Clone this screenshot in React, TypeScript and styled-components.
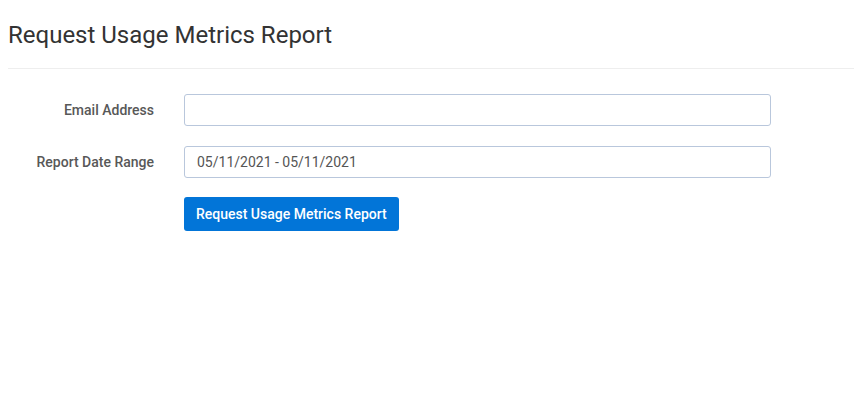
import styled, { createGlobalStyle } from 'styled-components';

const GlobalStyle = createGlobalStyle`
  body {
    margin: 0;
    background: #fff;
    font-family: Roboto, 'Liberation Sans', sans-serif;
  }
`;

const Page = styled.div`
  padding: 0 0 0 8px;
`;

const Title = styled.h1`
  margin: 21px 0 0;
  padding-bottom: 18px;
  font-size: 24px;
  font-weight: 400;
  line-height: 1.2;
  color: #333;
  border-bottom: 1px solid #eeeeee;
`;

const Form = styled.form`
  display: grid;
  grid-template-columns: 146px 587px;
  column-gap: 30px;
  row-gap: 20px;
  align-items: center;
  padding-top: 25px;
`;

const Label = styled.label`
  text-align: right;
  font-size: 14px;
  font-weight: 500;
  color: #585858;
`;

const Input = styled.input`
  box-sizing: border-box;
  width: 100%;
  height: 32px;
  padding: 0 12px;
  border: 1px solid #b9c7dc;
  border-radius: 3px;
  font-family: inherit;
  font-size: 14px;
  color: #555;
  background: #fff;

  &:focus {
    outline: none;
    border-color: #7fa7e0;
  }
`;

const Actions = styled.div`
  grid-column: 2;
  margin-top: -1px;
`;

const Button = styled.button`
  height: 34px;
  padding: 0 12px;
  border: none;
  border-radius: 3px;
  background: #0275d8;
  color: #fff;
  font-family: inherit;
  font-size: 14px;
  font-weight: 500;
  cursor: pointer;

  &:hover {
    background: #0265bc;
  }
`;

export default function App() {
  return (
    <Page>
      <GlobalStyle />
      <Title>Request Usage Metrics Report</Title>
      <Form onSubmit={(e) => e.preventDefault()}>
        <Label htmlFor="email">Email Address</Label>
        <Input id="email" type="email" />
        <Label htmlFor="range">Report Date Range</Label>
        <Input id="range" type="text" defaultValue="05/11/2021 - 05/11/2021" />
        <Actions>
          <Button type="submit">Request Usage Metrics Report</Button>
        </Actions>
      </Form>
    </Page>
  );
}
